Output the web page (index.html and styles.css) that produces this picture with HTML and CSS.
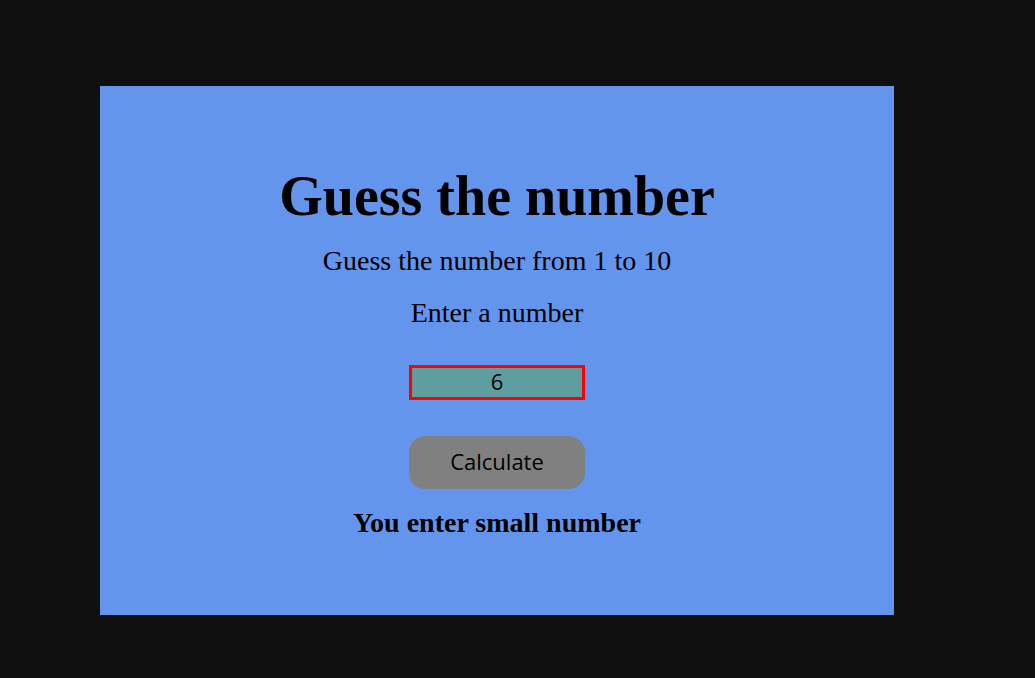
FILE: index.html
```html
<!DOCTYPE html>
<html>
<head>
<meta charset="utf-8">
<title>Guess the number</title>
<link rel="stylesheet" href="styles.css">
</head>
<body>
<main class="card">
  <h1 class="title">Guess the number</h1>
  <p class="subtitle">Guess the number from 1 to 10</p>
  <p class="label">Enter a number</p>
  <input class="guess" type="text" value="6">
  <button class="calc" type="button">Calculate</button>
  <p class="result">You enter small number</p>
</main>
</body>
</html>
```
FILE: styles.css
```css
html, body {
  margin: 0;
  padding: 0;
}
body {
  background: #0f0f0f;
  padding: 86px 0 0 100px;
  font-family: "Liberation Serif", "Times New Roman", serif;
  color: #000;
}
.card {
  box-sizing: border-box;
  width: 794px;
  height: 529px;
  background: #6495ed;
  display: flex;
  flex-direction: column;
  align-items: center;
  padding-top: 78px;
}
.title {
  margin: 0;
  font-size: 56px;
  line-height: 64px;
  font-weight: bold;
}
.subtitle {
  margin: 17px 0 0;
  font-size: 28px;
  line-height: 32px;
}
.label {
  margin: 20px 0 0;
  font-size: 28px;
  line-height: 32px;
}
.guess {
  box-sizing: border-box;
  margin: 36px 0 0;
  width: 176px;
  height: 35px;
  border: 3px solid #ff0000;
  background: #5f9ea0;
  font-family: "Open Sans", "Noto Sans", sans-serif;
  font-size: 22px;
  text-align: center;
  color: #000;
  padding: 0 0 4px;
  outline: none;
}
.calc {
  box-sizing: border-box;
  margin: 36px 0 0;
  width: 176px;
  height: 53px;
  border: none;
  border-radius: 16px;
  background: #808080;
  font-family: "Open Sans", "Noto Sans", sans-serif;
  font-size: 22px;
  color: #000;
  padding: 0 0 4px;
}
.result {
  margin: 18px 0 0;
  font-size: 28px;
  line-height: 32px;
  font-weight: bold;
}
```
